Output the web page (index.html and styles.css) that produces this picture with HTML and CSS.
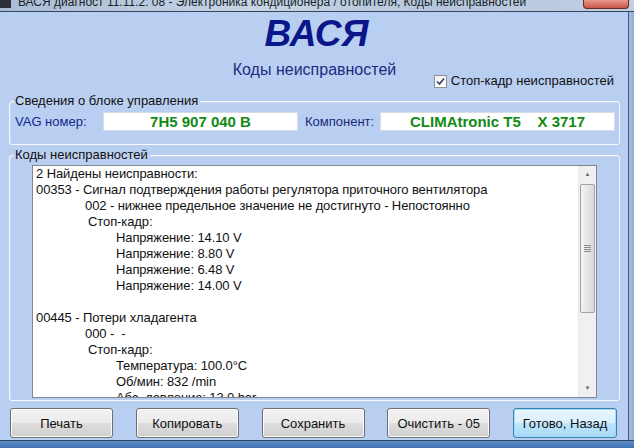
FILE: index.html
```html
<!DOCTYPE html>
<html lang="ru">
<head>
    <meta charset="UTF-8">
    <title>ВАСЯ диагност - Коды неисправностей</title>
    <link rel="stylesheet" href="styles.css">
</head>
<body>

<div class="window">
    <div class="titlebar">
        <span class="app-icon"></span>
        <span class="title-text">ВАСЯ диагност 11.11.2: 08 - Электроника кондиционера / отопителя,  Коды неисправностей</span>
        <span class="close-btn"></span>
    </div>

    <div class="middle">
        <div class="client">
            <div class="logo">ВАСЯ</div>
            <div class="subtitle">Коды неисправностей</div>
            <label class="check-row">
                <span class="checkbox">
                    <svg width="9" height="9" viewBox="0 0 9 9"><path d="M1 4.5 L3.5 7 L8 1.5" fill="none" stroke="#2b3f66" stroke-width="1.6"/></svg>
                </span>
                Стоп-кадр неисправностей
            </label>

            <fieldset class="group">
                <legend>Сведения о блоке управления</legend>
                <div class="info-row">
                    <span class="info-label">VAG номер:</span>
                    <span class="info-box">7H5 907 040 B</span>
                    <span class="info-label second">Компонент:</span>
                    <span class="info-box">CLIMAtronic T5&nbsp;&nbsp;&nbsp;&nbsp;X 3717</span>
                </div>
            </fieldset>

            <fieldset class="group codes">
                <legend>Коды неисправностей</legend>
                <div class="memo">
                    <div class="memo-text">
                        <div>2 Найдены неисправности:</div>
                        <div>00353 - Сигнал подтверждения работы регулятора приточного вентилятора</div>
                        <div class="ind1">002 - нижнее предельное значение не достигнуто - Непостоянно</div>
                        <div class="ind2">Стоп-кадр:</div>
                        <div class="ind3">Напряжение: 14.10 V</div>
                        <div class="ind3">Напряжение: 8.80 V</div>
                        <div class="ind3">Напряжение: 6.48 V</div>
                        <div class="ind3">Напряжение: 14.00 V</div>
                        <div>&nbsp;</div>
                        <div>00445 - Потери хладагента</div>
                        <div class="ind1">000 -&nbsp; -</div>
                        <div class="ind2">Стоп-кадр:</div>
                        <div class="ind3">Температура: 100.0°C</div>
                        <div class="ind3">Об/мин: 832 /min</div>
                        <div class="ind3">Абс. давление: 13.0 bar</div>
                    </div>
                    <div class="scrollbar">
                        <div class="arrow">&#9650;</div>
                        <div class="track">
                            <div class="thumb"><span class="grip"></span></div>
                        </div>
                        <div class="arrow">&#9660;</div>
                    </div>
                </div>
            </fieldset>

            <div class="buttons">
                <button>Печать</button>
                <button>Копировать</button>
                <button>Сохранить</button>
                <button>Очистить - 05</button>
                <button class="default">Готово, Назад</button>
            </div>
        </div>
        <div class="frame-right"></div>
    </div>

    <div class="frame-bottom"></div>
</div>

</body>
</html>
```

FILE: styles.css
```css
body {
    margin: 0;
    padding: 0;
    overflow: hidden;
    font-family: "Liberation Sans", Arial, sans-serif;
    background: #b9cff2;
}
.window {
    width: 634px;
    height: 448px;
    display: flex;
    flex-direction: column;
    overflow: hidden;
}
.titlebar {
    height: 11px;
    border-bottom: 1px solid #34445a;
    background: linear-gradient(90deg, #a9bcd4, #c6d4e6 40%, #b4c6dc 70%, #c1d0e3);
    display: flex;
    align-items: flex-start;
    overflow: hidden;
}
.app-icon {
    width: 11px;
    height: 8px;
    background: #2a2f38;
    flex: none;
}
.title-text {
    margin: -5px 0 0 7px;
    font-size: 12px;
    line-height: 14px;
    color: #1a1f29;
    white-space: nowrap;
    flex: 1;
}
.close-btn {
    width: 44px;
    height: 8px;
    margin-right: 5px;
    flex: none;
    border: 1px solid #6b2a23;
    border-top: none;
    border-radius: 0 0 4px 4px;
    background: linear-gradient(#e59a8a, #c9564a);
}
.middle {
    flex: 1;
    display: flex;
}
.client {
    flex: 1;
    padding: 0 8px 0 9px;
    display: flex;
    flex-direction: column;
    background: #b9cff2;
}
.frame-right {
    width: 5px;
    border-left: 1px solid #3e5678;
    background: linear-gradient(90deg, #a7bfdf, #8eabd3);
}
.frame-bottom {
    height: 7px;
    border-top: 1px solid #2f4566;
    background: linear-gradient(#5e8ec8, #3f72b4);
}
.logo {
    margin-top: 2px;
    text-align: center;
    font-size: 37px;
    line-height: 40px;
    font-weight: bold;
    font-style: italic;
    color: #0b168a;
    padding-left: 4px;
}
.subtitle {
    margin-top: 6px;
    text-align: center;
    font-size: 16px;
    line-height: 20px;
    color: #1d2b7e;
    transform: scaleY(1.08);
}
.check-row {
    margin-top: -7px;
    align-self: flex-end;
    padding-right: 6px;
    display: flex;
    align-items: center;
    font-size: 13px;
    line-height: 16px;
    color: #111;
}
.checkbox {
    width: 11px;
    height: 11px;
    margin-right: 4px;
    border: 1px solid #8e8f8f;
    background: linear-gradient(#f4f4f4, #ffffff);
    display: flex;
    align-items: center;
    justify-content: center;
}
.group {
    margin: 4px 0 0 0;
    padding: 3px 4px 13px 5px;
    border: 1px solid #f6f9fe;
    border-radius: 3px;
    box-shadow: inset 1px 1px 0 #c9d7ee;
    min-width: 0;
}
.group legend {
    padding: 0 2px 0 1px;
    margin-left: -1px;
    font-size: 13px;
    line-height: 16px;
    color: #111;
}
.info-row {
    display: grid;
    grid-template-columns: 88px 195px 82px 1fr;
    align-items: center;
    height: 19px;
}
.info-label {
    font-size: 13px;
    color: #13288e;
}
.info-label.second {
    padding-left: 7px;
    color: #1c2a78;
}
.info-box {
    height: 17px;
    border: 1px solid #d6dce6;
    background: #fff;
    color: #138a17;
    font-weight: bold;
    font-size: 15px;
    line-height: 17px;
    text-align: center;
    white-space: nowrap;
}
.group.codes {
    margin-top: 2px;
    padding: 2px 22px 2px 22px;
}
.group.codes legend {
    margin-left: -18px;
}
.memo {
    height: 231px;
    border: 1px solid #828790;
    background: #fff;
    display: flex;
}
.memo-text {
    flex: 1;
    padding-left: 3px;
    overflow: hidden;
    font-size: 13px;
    line-height: 16px;
    letter-spacing: -0.1px;
    color: #111;
    white-space: nowrap;
}
.ind1 {
    padding-left: 49px;
}
.ind2 {
    padding-left: 52px;
}
.ind3 {
    padding-left: 80px;
}
.scrollbar {
    width: 17px;
    display: flex;
    flex-direction: column;
    background: #f0f0f0;
    border-left: 1px solid #e8e8e8;
}
.arrow {
    height: 17px;
    font-size: 6px;
    line-height: 17px;
    text-align: center;
    color: #6a6a6a;
}
.track {
    flex: 1;
    padding: 1px 1px 0 1px;
}
.thumb {
    height: 127px;
    border: 1px solid #a2a2a2;
    border-radius: 2px;
    background: linear-gradient(90deg, #f4f4f4, #e6e6e6 50%, #d8d8d8);
    display: flex;
    align-items: center;
    justify-content: center;
}
.grip {
    width: 7px;
    height: 7px;
    background: repeating-linear-gradient(#8c8c8c 0 1px, transparent 1px 2px);
}
.buttons {
    margin-top: 7px;
    padding: 0 3px 0 1px;
    display: flex;
    justify-content: space-between;
}
button {
    width: 103px;
    height: 30px;
    padding: 0;
    border: 1px solid #707070;
    border-radius: 3px;
    background: linear-gradient(#f2f2f2, #ebebeb 50%, #dddddd 51%, #cfcfcf);
    box-shadow: inset 0 0 0 1px #fbfbfb;
    font-family: "Liberation Sans", Arial, sans-serif;
    font-size: 13px;
    color: #111;
}
button.default {
    width: 104px;
    border-color: #3c7fb1;
    background: linear-gradient(#eaf6fd, #d9f0fc 50%, #bee6fd 51%, #a7d9f5);
    box-shadow: inset 0 0 0 1px #9fdcf8;
}
```
